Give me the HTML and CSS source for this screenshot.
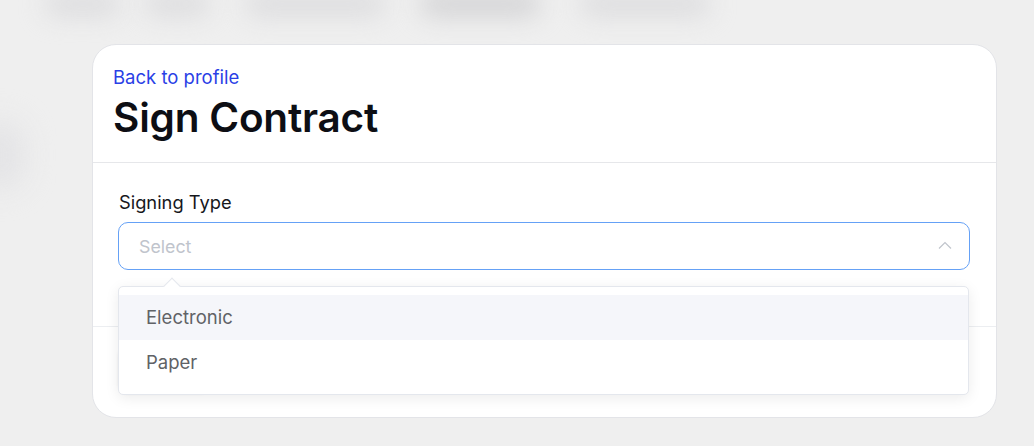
FILE: index.html
```html
<!DOCTYPE html>
<html>
<head>
<meta charset="utf-8">
<link rel="stylesheet" href="styles.css">
</head>
<body>
<div class="topbar">
  <span class="blob b1"></span>
  <span class="blob b2"></span>
  <span class="blob b3"></span>
  <span class="blob b4"></span>
  <span class="blob b5"></span>
</div>
<span class="side-blob"></span>
<main class="page">
  <section class="card">
    <header class="card-head">
      <a class="back" href="#">Back to profile</a>
      <h1 class="title">Sign Contract</h1>
    </header>
    <div class="card-body">
      <label class="label">Signing Type</label>
      <div class="select-wrap">
        <div class="select">
          <span class="placeholder">Select</span>
          <svg class="chevron" width="14" height="8" viewBox="0 0 14 8"><path d="M1 7.5 L7 1.5 L13 7.5" fill="none" stroke="#c0c4cc" stroke-width="1.2"/></svg>
        </div>
        <div class="dropdown">
          <span class="arrow"></span>
          <ul class="options">
            <li class="opt hover">Electronic</li>
            <li class="opt">Paper</li>
          </ul>
        </div>
      </div>
    </div>
    <footer class="card-foot">
      <span class="btn"></span>
    </footer>
  </section>
</main>
</body>
</html>
```
FILE: styles.css
```css
* { box-sizing: border-box; }
html, body { margin: 0; padding: 0; }
body {
  background: #efefef;
  font-family: Inter, "Noto Sans", sans-serif;
  width: 1034px;
  height: 446px;
  overflow: hidden;
  position: relative;
}
.topbar {
  height: 30px;
  position: relative;
}
.blob {
  position: absolute;
  top: -8px;
  height: 24px;
  background: #dcdcde;
  border-radius: 12px;
  filter: blur(12px);
}
.b1 { left: 45px; width: 75px; }
.b2 { left: 145px; width: 65px; }
.b3 { left: 245px; width: 140px; }
.b4 { left: 420px; width: 120px; background: #d2d2d4; }
.b5 { left: 580px; width: 130px; }
.side-blob {
  position: absolute;
  left: -25px;
  top: 120px;
  width: 50px;
  height: 70px;
  border-radius: 25px;
  background: #e4e4e6;
  filter: blur(14px);
}
.page {
  padding: 14px 38px 0 92px;
}
.card {
  width: 905px;
  height: 374px;
  background: #fff;
  border: 1px solid #e3e4e8;
  border-radius: 24px;
  display: flex;
  flex-direction: column;
  position: relative;
}
.card-head {
  padding: 20px 20px 0 20px;
  height: 118px;
  border-bottom: 1px solid #e6e7ea;
}
.back {
  display: block;
  color: #2a3fe6;
  text-decoration: none;
  font-size: 18.5px;
  line-height: 24px;
}
.title {
  margin: 4px 0 0 0;
  font-size: 40.5px;
  line-height: 50px;
  font-weight: 600;
  color: #0d0e14;
  letter-spacing: -0.2px;
}
.card-body {
  height: 164px;
  padding: 27px 26px 0 25px;
  border-bottom: 1px solid #eceef1;
}
.label {
  display: block;
  font-size: 18.3px;
  line-height: 25px;
  font-weight: 400;
  color: #16171c;
  margin-left: 1px;
}
.select-wrap {
  position: relative;
  margin-top: 7px;
}
.select {
  height: 48px;
  border: 1px solid #65a1f6;
  border-radius: 10px;
  display: flex;
  align-items: center;
  justify-content: space-between;
  padding: 0 17px 0 20px;
}
.placeholder {
  color: #c0c4cc;
  font-size: 17.8px;
}
.chevron { display: block; margin-top: -2px; }
.dropdown {
  position: absolute;
  left: 0;
  top: 64px;
  width: 851px;
  background: #fff;
  border: 1px solid #e4e7ed;
  border-radius: 5px;
  box-shadow: 0 3px 14px rgba(0,0,0,0.08);
  z-index: 5;
}
.arrow {
  position: absolute;
  top: -7px;
  left: 47px;
  width: 12px;
  height: 12px;
  background: #fff;
  border-left: 1px solid #e4e7ed;
  border-top: 1px solid #e4e7ed;
  transform: rotate(45deg);
}
.options {
  list-style: none;
  margin: 0;
  padding: 8px 0 9px 0;
  position: relative;
}
.opt {
  height: 45px;
  line-height: 45px;
  padding: 0 27px;
  font-size: 18.5px;
  color: #606266;
}
.opt.hover { background: #f5f6fa; }
.card-foot {
  flex: 1;
  padding: 18px 26px 0 25px;
}
.btn {
  display: block;
  width: 92px;
  height: 48px;
  border: 1px solid #e3e4e8;
  border-radius: 10px;
  background: #fff;
  box-shadow: 0 1px 3px rgba(0,0,0,0.08);
}
```
